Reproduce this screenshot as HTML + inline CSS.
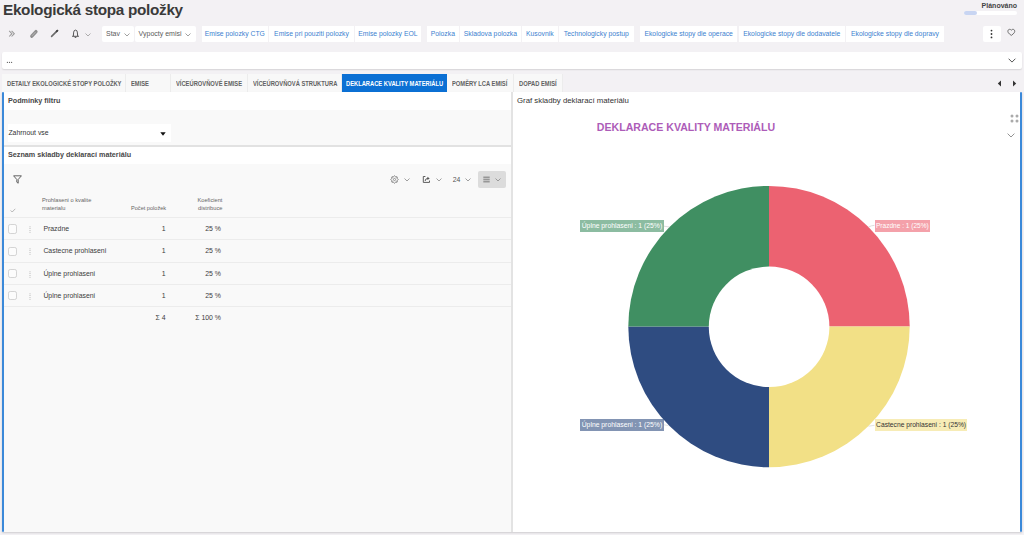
<!DOCTYPE html>
<html><head><meta charset="utf-8">
<style>
*{box-sizing:border-box;margin:0;padding:0}
html,body{width:1024px;height:535px;overflow:hidden}
body{background:#f3f1f4;font-family:"Liberation Sans",sans-serif;color:#333;position:relative}
.a{position:absolute}

.t{position:absolute;white-space:nowrap;line-height:1}
.btn{position:absolute;background:#fff;top:26px;height:16px;border-radius:2px}
.lk{position:absolute;top:26px;height:16px;background:#fff;color:#3d7fcf;font-size:6.8px;line-height:16px;text-align:center;white-space:nowrap}
.tab{position:absolute;top:74px;height:18px;background:#f8f8f8;color:#626262;font-size:6.6px;font-weight:700;line-height:19.2px;text-align:left;padding-left:4.7px;white-space:nowrap;border-right:1px solid #ececec}
.row{position:absolute;left:4px;width:221px;height:22px;border-bottom:1px solid #ececec}
.cb{position:absolute;left:7.6px;width:9px;height:9.2px;border:1px solid #d4d4d4;border-radius:2.2px;background:#fcfcfc}
.dr{position:absolute;left:29.5px;width:1px;height:6px;border-left:1px dotted #aaa}
.tab span{display:inline-block;transform:scaleX(0.875);transform-origin:0 50%}
.cell{position:absolute;font-size:6.9px;color:#3c3c3c;white-space:nowrap;line-height:1}
.lbl{position:absolute;height:11.5px;font-size:6.6px;line-height:11.5px;color:#fff;white-space:nowrap;padding-left:1.5px}
</style></head><body>

<!-- Title -->
<div class="t" style="left:3px;top:1.5px;font-size:15.3px;font-weight:700;color:#3a3a3a;letter-spacing:-0.3px">Ekologická stopa položky</div>
<div class="t" style="right:7px;top:2.1px;font-size:7px;font-weight:700;color:#444">Plánováno</div>
<div class="a" style="left:964px;top:11px;width:53px;height:4px;background:#fff;border-radius:2px"></div>
<div class="a" style="left:964px;top:11px;width:13px;height:4px;background:#c8d5f2;border-radius:2px"></div>

<!-- toolbar icons -->
<svg class="a" style="left:8px;top:30px" width="8" height="8" viewBox="0 0 8 8"><path d="M1.2 0.9 L3.9 3.7 L1.2 6.5 M3.6 0.9 L6.3 3.7 L3.6 6.5" fill="none" stroke="#999" stroke-width="1.05"/></svg>
<svg class="a" style="left:29px;top:29px" width="10" height="10" viewBox="0 0 10 10"><path d="M2.8 7.2 L7 2.6" stroke="#8f8f8f" stroke-width="3.3" stroke-linecap="round"/><path d="M3.2 6.6 L6.4 3.2" stroke="#b5b5b5" stroke-width="1" stroke-linecap="round"/></svg>
<svg class="a" style="left:50px;top:29px" width="10" height="10" viewBox="0 0 10 10"><path d="M1.6 7.4 L7.4 1.6" stroke="#6a6a6a" stroke-width="1.6" stroke-linecap="round"/><path d="M6.6 2.4 L7.4 1.6" stroke="#444" stroke-width="1.8" stroke-linecap="round"/></svg>
<svg class="a" style="left:71px;top:29px" width="9" height="10" viewBox="0 0 9 10"><path d="M2.3 7 L2.7 3.1 Q2.9 1.1 4.5 1.1 Q6.1 1.1 6.3 3.1 L6.7 7 M1.1 7.3 L7.9 7.3" fill="none" stroke="#444" stroke-width="0.9"/><path d="M3.7 8.4 L5.3 8.4" stroke="#444" stroke-width="0.9"/></svg>
<svg class="a" style="left:84.8px;top:33.3px" width="6" height="4" viewBox="0 0 6 4"><path d="M0.5 0.5 L3 3 L5.5 0.5" fill="none" stroke="#999" stroke-width="0.8"/></svg>

<!-- Stav / Vypocty -->
<div class="btn" style="left:102px;width:32px"></div>
<div class="btn" style="left:135px;width:61px"></div>
<div class="t" style="left:106px;top:29.9px;font-size:7px;color:#5a5a5a">Stav</div>
<svg class="a" style="left:124px;top:33px" width="6" height="4" viewBox="0 0 6 4"><path d="M0.5 0.5 L3 3 L5.5 0.5" fill="none" stroke="#888" stroke-width="0.8"/></svg>
<div class="t" style="left:138.6px;top:29.9px;font-size:7px;color:#5a5a5a">Vypocty emisi</div>
<svg class="a" style="left:185px;top:33px" width="6" height="4" viewBox="0 0 6 4"><path d="M0.5 0.5 L3 3 L5.5 0.5" fill="none" stroke="#888" stroke-width="0.8"/></svg>

<!-- link buttons -->
<div class="lk" style="left:202px;width:65.6px">Emise polozky CTG</div>
<div class="lk" style="left:269px;width:85px">Emise pri pouziti polozky</div>
<div class="lk" style="left:355px;width:65.7px">Emise polozky EOL</div>
<div class="lk" style="left:427px;width:31.7px">Polozka</div>
<div class="lk" style="left:460px;width:60.8px">Skladova polozka</div>
<div class="lk" style="left:521.8px;width:36px">Kusovnik</div>
<div class="lk" style="left:559px;width:74.7px">Technologicky postup</div>
<div class="lk" style="left:640px;width:97.3px">Ekologicke stopy dle operace</div>
<div class="lk" style="left:738.5px;width:106.5px">Ekologicke stopy dle dodavatele</div>
<div class="lk" style="left:846px;width:98px">Ekologicke stopy dle dopravy</div>

<div class="btn" style="left:982.5px;width:18.5px"></div>
<svg class="a" style="left:990px;top:29px" width="3" height="10" viewBox="0 0 3 10"><circle cx="1.5" cy="1.6" r="0.9" fill="#333"/><circle cx="1.5" cy="5" r="0.9" fill="#333"/><circle cx="1.5" cy="8.4" r="0.9" fill="#333"/></svg>
<svg class="a" style="left:1007.4px;top:28.4px" width="9" height="9" viewBox="0 0 9 9"><path d="M4.3 7.4 C1.2 5.3 0.7 4 0.9 2.8 C1.2 1.2 3.2 0.7 4.3 2.2 C5.4 0.7 7.4 1.2 7.7 2.8 C7.9 4 7.4 5.3 4.3 7.4 Z" fill="none" stroke="#6a6a6a" stroke-width="0.95" stroke-linejoin="round"/></svg>

<!-- input bar -->
<div class="a" style="left:2px;top:52px;width:1020px;height:17px;background:#fff;border-radius:2px;box-shadow:0 1px 1.5px rgba(0,0,0,0.12)"></div>
<svg class="a" style="left:6px;top:61px" width="8" height="3" viewBox="0 0 8 3"><circle cx="1.4" cy="1.3" r="0.65" fill="#555"/><circle cx="3.5" cy="1.3" r="0.65" fill="#555"/><circle cx="5.6" cy="1.3" r="0.65" fill="#555"/></svg>
<svg class="a" style="left:1008px;top:57.5px" width="9" height="6" viewBox="0 0 9 6"><path d="M0.6 0.7 L4 4.1 L7.4 0.7" fill="none" stroke="#555" stroke-width="1"/></svg>

<!-- tabs -->
<div class="tab" style="left:2px;width:124px"><span>DETAILY EKOLOGICKÉ STOPY POLOŽKY</span></div>
<div class="tab" style="left:126px;width:45px"><span>EMISE</span></div>
<div class="tab" style="left:171px;width:77px"><span>VÍCEÚROVŇOVÉ EMISE</span></div>
<div class="tab" style="left:248px;width:93.7px"><span>VÍCEÚROVŇOVÁ STRUKTURA</span></div>
<div class="tab" style="left:341.7px;width:105.5px;background:#0b70d4;color:#fff;border-right:none"><span>DEKLARACE KVALITY MATERIÁLU</span></div>
<div class="tab" style="left:447.2px;width:66.8px"><span>POMĚRY LCA EMISÍ</span></div>
<div class="tab" style="left:514px;width:48.5px;padding-left:5px"><span>DOPAD EMISÍ</span></div>
<svg class="a" style="left:997px;top:80px" width="5" height="7" viewBox="0 0 5 7"><path d="M4 0.5 L0.8 3.5 L4 6.5 Z" fill="#333"/></svg>
<svg class="a" style="left:1012px;top:80px" width="5" height="7" viewBox="0 0 5 7"><path d="M1 0.5 L4.2 3.5 L1 6.5 Z" fill="#333"/></svg>

<!-- main panels -->
<div class="a" style="left:2px;top:92px;width:1020px;height:440px;background:#fff;box-shadow:0 1px 1.5px rgba(0,0,0,0.15)"></div>
<div class="a" style="left:2px;top:92px;width:1.7px;height:439.5px;background:#3b89d9;border-radius:1px"></div>
<div class="a" style="left:1020.3px;top:92px;width:1.7px;height:439.5px;background:#3b89d9;border-radius:1px"></div>

<!-- left panel -->
<div class="a" style="left:4px;top:110px;width:507px;height:35px;background:#f9f9f9"></div>
<div class="t" style="left:8px;top:97px;font-size:7.2px;font-weight:700;color:#484848">Podmínky filtru</div>
<div class="a" style="left:8px;top:124px;width:162.6px;height:17.7px;background:#fff"></div>
<div class="t" style="left:8.4px;top:130.2px;font-size:6.9px;color:#333">Zahrnout vse</div>
<svg class="a" style="left:159.5px;top:131.6px" width="6" height="4" viewBox="0 0 6 4"><path d="M0.3 0.3 L5.7 0.3 L3 3.7 Z" fill="#111"/></svg>
<div class="a" style="left:4px;top:145px;width:507px;height:1.5px;background:#e2e2e2"></div>
<div class="t" style="left:8px;top:150.5px;font-size:7.2px;font-weight:700;color:#484848">Seznam skladby deklarací materiálu</div>
<div class="a" style="left:4px;top:164px;width:507px;height:367.5px;background:#f9f9f9"></div>
<div class="a" style="left:511.4px;top:92px;width:1.5px;height:439.5px;background:#e3e3e3"></div>

<!-- table toolbar -->
<svg class="a" style="left:13px;top:175px" width="9" height="9" viewBox="0 0 9 9"><path d="M0.6 0.8 L8.4 0.8 L5.2 4.5 L5.2 8.2 L3.8 7.2 L3.8 4.5 Z" fill="none" stroke="#555" stroke-width="0.9" stroke-linejoin="round"/></svg>

<svg class="a" style="left:389.5px;top:175px" width="9" height="9" viewBox="0 0 9 9"><path d="M4.50 0.80 L5.61 1.82 L7.12 1.88 L7.18 3.39 L8.20 4.50 L7.18 5.61 L7.12 7.12 L5.61 7.18 L4.50 8.20 L3.39 7.18 L1.88 7.12 L1.82 5.61 L0.80 4.50 L1.82 3.39 L1.88 1.88 L3.39 1.82 Z" fill="none" stroke="#6a6a6a" stroke-width="0.85" stroke-linejoin="round"/><circle cx="4.5" cy="4.5" r="1.1" fill="none" stroke="#777" stroke-width="0.75"/></svg>
<svg class="a" style="left:403.5px;top:177.6px" width="6" height="4" viewBox="0 0 6 4"><path d="M0.5 0.5 L3 3 L5.5 0.5" fill="none" stroke="#888" stroke-width="0.8"/></svg>
<svg class="a" style="left:422px;top:175px" width="9" height="9" viewBox="0 0 9 9"><path d="M3.4 1.5 L1.3 1.5 L1.3 7.4 L7.5 7.4 L7.5 5.6" fill="none" stroke="#555" stroke-width="0.95"/><path d="M3.1 6 Q3.2 3.4 6 3.4" fill="none" stroke="#555" stroke-width="0.95"/><path d="M5.4 1.7 L7.7 3.4 L5.4 5.1 Z" fill="#555"/></svg>
<svg class="a" style="left:435.5px;top:178px" width="6" height="4" viewBox="0 0 6 4"><path d="M0.5 0.5 L3 3 L5.5 0.5" fill="none" stroke="#888" stroke-width="0.8"/></svg>
<div class="t" style="left:452.7px;top:176.9px;font-size:6.9px;color:#555">24</div>
<svg class="a" style="left:464.5px;top:178px" width="6" height="4" viewBox="0 0 6 4"><path d="M0.5 0.5 L3 3 L5.5 0.5" fill="none" stroke="#888" stroke-width="0.8"/></svg>
<div class="a" style="left:477.8px;top:171px;width:28.2px;height:17.3px;background:#dcdcdc;border-radius:2px"></div>
<svg class="a" style="left:483px;top:176px" width="7" height="7" viewBox="0 0 7 7"><rect x="0.3" y="0.5" width="6.4" height="1.6" fill="#979797"/><rect x="0.3" y="2.7" width="6.4" height="1.6" fill="#979797"/><rect x="0.3" y="4.9" width="6.4" height="1.6" fill="#979797"/></svg>
<svg class="a" style="left:494.5px;top:178px" width="6" height="4" viewBox="0 0 6 4"><path d="M0.5 0.5 L3 3 L5.5 0.5" fill="none" stroke="#888" stroke-width="0.8"/></svg>

<!-- table header -->
<div class="a" style="left:4px;top:217px;width:507px;height:1px;background:#ececec"></div>
<svg class="a" style="left:9.5px;top:207.5px" width="6" height="5" viewBox="0 0 6 5"><path d="M0.6 2.4 L2.2 4 L5.3 0.8" fill="none" stroke="#999" stroke-width="0.7"/></svg>
<div class="t" style="left:42px;top:195.6px;font-size:5.7px;color:#666;line-height:8.3px">Prohlaseni o kvalite<br>materialu</div>
<div class="t" style="left:131px;top:206px;font-size:5.6px;color:#666">Počet položek</div>
<div class="t" style="right:801.6px;top:195.6px;font-size:5.7px;color:#666;line-height:8.3px;text-align:right">Koeficient<br>distribuce</div>

<!-- rows -->
<div class="a" style="left:4px;top:239.3px;width:507px;height:1px;background:#ececec"></div>
<div class="a" style="left:4px;top:261.6px;width:507px;height:1px;background:#ececec"></div>
<div class="a" style="left:4px;top:283.9px;width:507px;height:1px;background:#ececec"></div>
<div class="a" style="left:4px;top:306.2px;width:507px;height:1px;background:#ececec"></div>

<div class="cb" style="top:224.4px"></div>
<div class="cb" style="top:246.7px"></div>
<div class="cb" style="top:269px"></div>
<div class="cb" style="top:291.3px"></div>

<svg class="a" style="left:29px;top:226px" width="2" height="7" viewBox="0 0 2 7"><circle cx="1" cy="0.8" r="0.5" fill="#aaa"/><circle cx="1" cy="2.6" r="0.5" fill="#aaa"/><circle cx="1" cy="4.4" r="0.5" fill="#aaa"/><circle cx="1" cy="6.2" r="0.5" fill="#aaa"/></svg>
<svg class="a" style="left:29px;top:248.3px" width="2" height="7" viewBox="0 0 2 7"><circle cx="1" cy="0.8" r="0.5" fill="#aaa"/><circle cx="1" cy="2.6" r="0.5" fill="#aaa"/><circle cx="1" cy="4.4" r="0.5" fill="#aaa"/><circle cx="1" cy="6.2" r="0.5" fill="#aaa"/></svg>
<svg class="a" style="left:29px;top:270.6px" width="2" height="7" viewBox="0 0 2 7"><circle cx="1" cy="0.8" r="0.5" fill="#aaa"/><circle cx="1" cy="2.6" r="0.5" fill="#aaa"/><circle cx="1" cy="4.4" r="0.5" fill="#aaa"/><circle cx="1" cy="6.2" r="0.5" fill="#aaa"/></svg>
<svg class="a" style="left:29px;top:292.9px" width="2" height="7" viewBox="0 0 2 7"><circle cx="1" cy="0.8" r="0.5" fill="#aaa"/><circle cx="1" cy="2.6" r="0.5" fill="#aaa"/><circle cx="1" cy="4.4" r="0.5" fill="#aaa"/><circle cx="1" cy="6.2" r="0.5" fill="#aaa"/></svg>

<div class="cell" style="left:43.4px;top:225.9px">Prazdne</div>
<div class="cell" style="left:43.4px;top:248.2px">Castecne prohlaseni</div>
<div class="cell" style="left:43.4px;top:270.5px">Úplne prohlaseni</div>
<div class="cell" style="left:43.4px;top:292.8px">Úplne prohlaseni</div>

<div class="cell" style="right:858.5px;top:225.9px">1</div>
<div class="cell" style="right:858.5px;top:248.2px">1</div>
<div class="cell" style="right:858.5px;top:270.5px">1</div>
<div class="cell" style="right:858.5px;top:292.8px">1</div>
<div class="cell" style="right:803px;top:225.9px">25 %</div>
<div class="cell" style="right:803px;top:248.2px">25 %</div>
<div class="cell" style="right:803px;top:270.5px">25 %</div>
<div class="cell" style="right:803px;top:292.8px">25 %</div>
<div class="cell" style="right:858.5px;top:314.8px">Σ 4</div>
<div class="cell" style="right:803px;top:314.8px">Σ 100 %</div>

<!-- right panel -->
<div class="t" style="left:517px;top:97.1px;font-size:7.8px;color:#333">Graf skladby deklarací materiálu</div>
<div class="t" style="left:596.8px;top:121.5px;font-size:10.6px;font-weight:700;color:#ad5cb8">DEKLARACE KVALITY MATERIÁLU</div>
<svg class="a" style="left:1010px;top:114px" width="9" height="9" viewBox="0 0 9 9"><circle cx="2" cy="2" r="1.5" fill="#aaa"/><circle cx="7" cy="2" r="1.5" fill="#aaa"/><circle cx="2" cy="7" r="1.5" fill="#aaa"/><circle cx="7" cy="7" r="1.5" fill="#aaa"/></svg>
<svg class="a" style="left:1007px;top:133px" width="8" height="5" viewBox="0 0 8 5"><path d="M0.6 0.6 L4 4 L7.4 0.6" fill="none" stroke="#777" stroke-width="0.8"/></svg>

<!-- donut -->
<svg class="a" style="left:0;top:0" width="1024" height="535" viewBox="0 0 1024 535">
<path d="M769 326.6 L769 185.9 A140.7 140.7 0 0 1 909.7 326.6 Z" fill="#ec6271"/>
<path d="M769 326.6 L909.7 326.6 A140.7 140.7 0 0 1 769 467.3 Z" fill="#f2e086"/>
<path d="M769 326.6 L769 467.3 A140.7 140.7 0 0 1 628.3 326.6 Z" fill="#2f4c81"/>
<path d="M769 326.6 L628.3 326.6 A140.7 140.7 0 0 1 769 185.9 Z" fill="#408f62"/>
<circle cx="769.1" cy="326.8" r="60.3" fill="#fff"/>
<path d="M664 226.2 L669.5 227" stroke="#d6d6d6" stroke-width="0.8"/>
<path d="M868.5 227 Q871 225.6 874.5 225.3" fill="none" stroke="#d6d6d6" stroke-width="0.8"/>
<path d="M664 424.8 L668.5 425.6" stroke="#dadada" stroke-width="0.8"/>
<path d="M868.5 426.2 L874.5 425.3" stroke="#dadada" stroke-width="0.8"/>
</svg>
<div class="lbl" style="left:580.2px;top:220px;width:83.8px;font-size:6.8px;background:rgba(64,143,98,0.6)">Úplne prohlaseni : 1 (25%)</div>
<div class="lbl" style="left:874.5px;top:220px;width:55.5px;font-size:6.55px;background:rgba(236,98,113,0.6)">Prazdne : 1 (25%)</div>
<div class="lbl" style="left:580.2px;top:419px;width:83.8px;font-size:6.8px;background:rgba(47,76,129,0.6)">Úplne prohlaseni : 1 (25%)</div>
<div class="lbl" style="left:874.6px;top:419px;width:92.7px;font-size:6.7px;background:rgba(242,224,134,0.6);color:#333">Castecne prohlaseni : 1 (25%)</div>

</body></html>
